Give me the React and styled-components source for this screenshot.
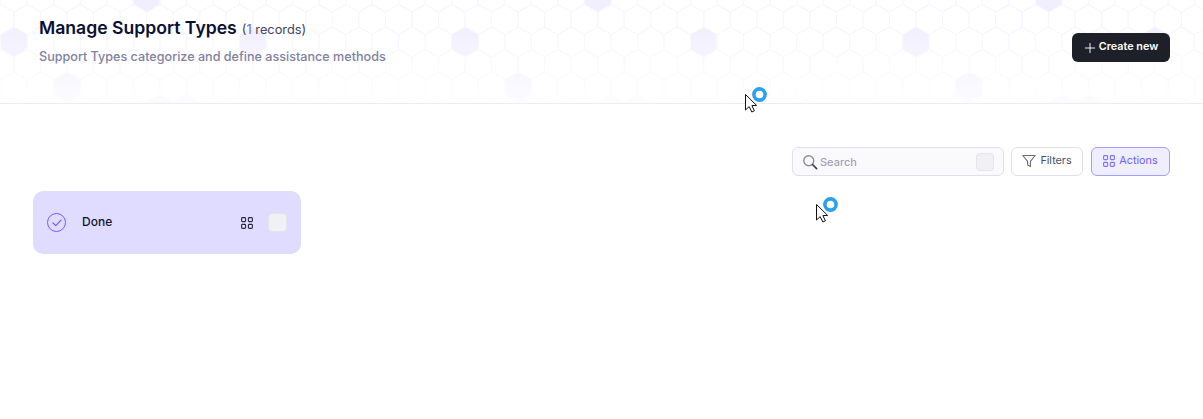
import styled, { createGlobalStyle } from "styled-components"
import { Plus } from "lucide-react"

const GlobalStyle = createGlobalStyle`
  html, body { margin: 0; padding: 0; background: #fff; }
  body { font-family: Inter, "Liberation Sans", sans-serif; overflow: hidden; }
`

// honeycomb behind the header, the tinted cells repeat every 451px
const HEX_W = 26.53
const ROW_H = 22.5
const RADIUS = 15.2
const tinted = [[0, 147], [2, 14], [2, 253], [4, 67], [5, 160], [5, 187]]

function hexPoints(cx, cy) {
    const w = HEX_W / 2
    const h = RADIUS / 2
    return [
        [cx, cy - RADIUS], [cx + w, cy - h], [cx + w, cy + h],
        [cx, cy + RADIUS], [cx - w, cy + h], [cx - w, cy - h],
    ].map((p) => p.join(",")).join(" ")
}

function HexBackground() {
    const cells = []
    tinted.forEach(([row, x0]) => {
        for (let k = 0; k < 3; k++) {
            const y = -3 + row * ROW_H
            cells.push(<polygon key={"t" + row + x0 + k} points={hexPoints(x0 + k * 451, y)} fill="#f1effe" />)
        }
    })
    for (let row = 0; row < 6; row++) {
        const shift = row % 2 === 0 ? 14 : 0.73
        for (let i = 0; i < 47; i++) {
            const x = shift + i * HEX_W
            const y = -3 + row * ROW_H
            cells.push(<polygon key={row + "-" + i} points={hexPoints(x, y)} fill="none" stroke="#f7f6fe" strokeWidth="1" />)
        }
    }
    return <HexSvg width="1203" height="103">{cells}</HexSvg>
}

function GridIcon({ size, color }) {
    return (
        <svg width={size} height={size} viewBox="0 0 12 12" fill="none" stroke={color} strokeWidth="1.1">
            <rect x="0.6" y="0.6" width="4" height="4" rx="0.9" />
            <rect x="7.4" y="0.6" width="4" height="4" rx="0.9" />
            <rect x="0.6" y="7.4" width="4" height="4" rx="0.9" />
            <rect x="7.4" y="7.4" width="4" height="4" rx="0.9" />
        </svg>
    )
}

function BusyCursor({ x, y }) {
    return (
        <CursorBox style={{ left: x, top: y }}>
            <svg width="24" height="26" viewBox="0 0 24 26">
                <circle cx="15.5" cy="7.5" r="5.6" fill="none" stroke="#2aa0ee" strokeWidth="3.6" />
                <path d="M1.5 7.5 L1.5 23 L5.2 19.6 L7.8 25 L10.4 23.8 L7.9 18.6 L12.6 18.4 Z" fill="#fff" stroke="#111" strokeWidth="1" strokeLinejoin="round" />
            </svg>
        </CursorBox>
    )
}

export default function App() {
    return (
        <>
            <GlobalStyle />
            <Page>
                <Header>
                    <HexBackground />
                    <HeaderText>
                        <TitleRow>
                            <h1>Manage Support Types</h1>
                            <Records>(<b>1</b> records)</Records>
                        </TitleRow>
                        <Subtitle>Support Types categorize and define assistance methods</Subtitle>
                    </HeaderText>
                    <CreateButton><Plus size={16} strokeWidth={1.4} />Create new</CreateButton>
                </Header>
                <Toolbar>
                    <SearchBox>
                        <svg width="16" height="16" viewBox="0 0 16 16" fill="none">
                            <circle cx="6.8" cy="6.8" r="5" stroke="#8b8b9c" strokeWidth="1.4" />
                            <path d="M10.5 10.5 L14.6 14.6" stroke="#3a3a4a" strokeWidth="1.6" strokeLinecap="round" />
                        </svg>
                        <span>Search</span>
                        <Checkbox $size={18} />
                    </SearchBox>
                    <ToolButton $width={72}>
                        <svg width="14" height="14" viewBox="0 0 14 14" fill="none" stroke="#6b6b7d" strokeWidth="1.1" strokeLinejoin="round">
                            <path d="M0.8 1.5 H13.2 L8.4 7.4 V12.6 L5.6 11 V7.4 Z" />
                        </svg>
                        Filters
                    </ToolButton>
                    <ToolButton $width={79} $active>
                        <GridIcon size={12} color="#7c72f6" />
                        Actions
                    </ToolButton>
                </Toolbar>
                <CardList>
                    <Card>
                        <CheckCircle>
                            <svg width="10" height="8" viewBox="0 0 10 8" fill="none" stroke="#6f5ff5" strokeWidth="1.2" strokeLinecap="round" strokeLinejoin="round">
                                <path d="M1 4 L3.8 6.6 L9 1.2" />
                            </svg>
                        </CheckCircle>
                        <CardName>Done</CardName>
                        <GridIcon size={12} color="#2b2b45" />
                        <Checkbox $size={19} />
                    </Card>
                </CardList>
                <BusyCursor x={744} y={87} />
                <BusyCursor x={815} y={197} />
            </Page>
        </>
    )
}

const Page = styled.div`
  position: relative;
  width: 1203px;
  height: 419px;
  overflow: hidden;
  background: #fff;
`

const Header = styled.header`
  position: relative;
  height: 103px;
  box-sizing: content-box;
  border-bottom: 1px solid #ecedf2;
  display: flex;
  align-items: flex-start;
  justify-content: space-between;
  padding: 0 33px 0 39px;
  overflow: hidden;
`

const HexSvg = styled.svg`
  position: absolute;
  left: 0;
  top: 0;
  mask-image: linear-gradient(to bottom, #000 25%, rgba(0, 0, 0, 0.2) 100%);
`

const HeaderText = styled.div`
  position: relative;
  padding-top: 16px;
`

const TitleRow = styled.div`
  display: flex;
  align-items: baseline;
  gap: 5px;
  h1 {
    margin: 0;
    font-size: 17.6px;
    line-height: 24px;
    font-weight: 600;
    color: #0a1033;
  }
`

const Records = styled.span`
  font-size: 12.8px;
  color: #3f4260;
  b {
    font-weight: 400;
    color: #6f63f5;
  }
`

const Subtitle = styled.p`
  margin: 8px 0 0;
  font-size: 12.6px;
  line-height: 18px;
  font-weight: 500;
  color: #7f819f;
`

const CreateButton = styled.button`
  position: relative;
  margin-top: 33px;
  width: 98px;
  height: 29px;
  padding: 0 2px 2px 0;
  display: flex;
  align-items: center;
  justify-content: center;
  gap: 1px;
  border: 0;
  border-radius: 6px;
  background: #1e2029;
  color: #fff;
  font-family: inherit;
  font-size: 10.8px;
  font-weight: 600;
  svg { margin-top: 3px; }
`

const Toolbar = styled.div`
  display: flex;
  justify-content: flex-end;
  gap: 7px;
  padding: 43px 33px 0 0;
`

const SearchBox = styled.div`
  width: 212px;
  height: 29px;
  box-sizing: border-box;
  display: flex;
  align-items: center;
  gap: 2px;
  padding: 0 9px;
  border: 1px solid #dfdff0;
  border-radius: 6px;
  background: #fafafc;
  font-size: 11px;
  font-weight: 500;
  color: #a2a2b6;
  span { flex: 1; }
`

const ToolButton = styled.div`
  width: ${(p) => p.$width}px;
  height: 29px;
  box-sizing: border-box;
  display: flex;
  align-items: center;
  justify-content: center;
  gap: 4px;
  margin-left: ${(p) => (p.$active ? "1px" : "0")};
  padding-bottom: 2px;
  border: 1px solid ${(p) => (p.$active ? "#a49dfb" : "#dfdff0")};
  border-radius: 6px;
  background: ${(p) => (p.$active ? "#efeeff" : "#fff")};
  color: ${(p) => (p.$active ? "#6a60f4" : "#4b4d63")};
  font-size: 10.8px;
  font-weight: 400;
`

const Checkbox = styled.i`
  display: block;
  width: ${(p) => p.$size}px;
  height: ${(p) => p.$size}px;
  box-sizing: border-box;
  border: 1px solid #e4e4ec;
  border-radius: 4px;
  background: #f0f0f5;
`

const CardList = styled.div`
  padding: 15px 0 0 33px;
`

const Card = styled.div`
  width: 268px;
  height: 63px;
  box-sizing: border-box;
  display: flex;
  align-items: center;
  padding: 0 14px;
  border-radius: 10px;
  background: #dfdcff;
  > svg { margin-right: 15px; }
`

const CheckCircle = styled.span`
  width: 19px;
  height: 19px;
  box-sizing: border-box;
  display: flex;
  align-items: center;
  justify-content: center;
  border: 1px solid #6f5ff5;
  border-radius: 50%;
`

const CardName = styled.span`
  flex: 1;
  margin: 0 0 2px 16px;
  font-size: 12px;
  font-weight: 500;
  color: #11132f;
`

const CursorBox = styled.div`
  position: absolute;
  line-height: 0;
`
